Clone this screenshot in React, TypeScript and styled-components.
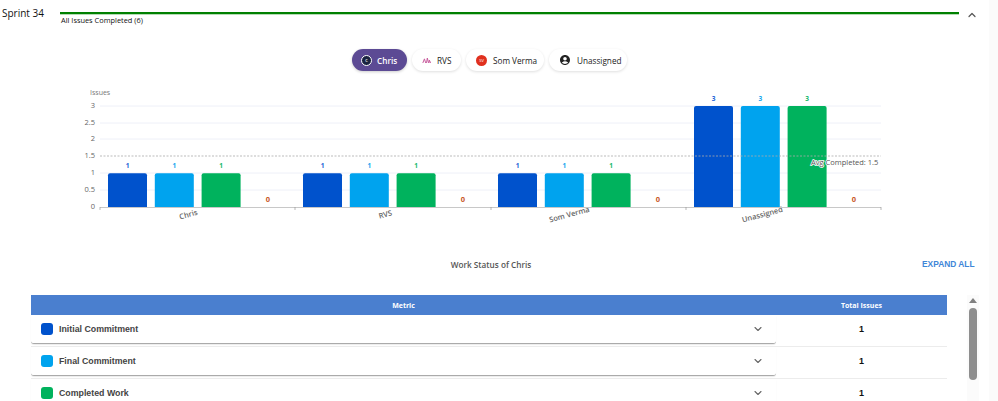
import React from 'react';
import styled, { createGlobalStyle } from 'styled-components';
import { MdAccountCircle } from 'react-icons/md';
import { ChevronDown, ChevronUp } from 'lucide-react';

const BLUE = '#0052cc';
const SKY = '#00a3ee';
const GREEN = '#00b25d';

const GlobalStyle = createGlobalStyle`
  html, body {
    margin: 0;
    height: 401px;
    overflow: hidden;
    background: #fff;
    font-family: "Open Sans", "Liberation Sans", sans-serif;
  }
`;

const Page = styled.div`
  width: 998px;
  height: 401px;
  box-sizing: border-box;
  overflow: hidden;
  border-right: 9px solid #fbfbfb;
`;

const SprintHeader = styled.div`
  display: grid;
  grid-template-columns: 60px 899px 19px;
  height: 43px;
`;

const SprintName = styled.div`
  font-size: 10px;
  line-height: 14px;
  padding: 6px 0 0 2px;
  color: #111;
`;

const Progress = styled.div`
  padding-top: 12px;
`;

const ProgressBar = styled.div`
  height: 2px;
  background: #008000;
  box-shadow: 0 1px 0 #b5dcb5;
`;

const ProgressLabel = styled.div`
  font-size: 7.4px;
  line-height: 10px;
  margin: 1px 0 0 1px;
  color: #111;
`;

const Collapse = styled.div`
  display: flex;
  justify-content: flex-end;
  padding: 9px 0 0 0;
  color: #555;
`;

const Pills = styled.div`
  display: flex;
  gap: 5px;
  padding-left: 352px;
  height: 22px;
  margin: 6px 0 0;
`;

const Pill = styled.div<{ $active?: boolean; $width: number }>`
  display: flex;
  align-items: center;
  gap: ${(p) => (p.$active ? 5 : 6)}px;
  box-sizing: border-box;
  width: ${(p) => p.$width}px;
  height: 22px;
  padding-left: ${(p) => (p.$active ? 9 : 10)}px;
  border-radius: 11px;
  font-size: 8.2px;
  font-weight: ${(p) => (p.$active ? 600 : 400)};
  color: ${(p) => (p.$active ? '#fff' : '#222')};
  background: ${(p) => (p.$active ? '#5c4a94' : '#fff')};
  box-shadow: 0 1px 3px rgba(0, 0, 0, ${(p) => (p.$active ? 0.2 : 0.13)});
`;

const Avatar = styled.span<{ $bg: string }>`
  display: inline-flex;
  align-items: center;
  justify-content: center;
  box-sizing: border-box;
  width: 11px;
  height: 11px;
  flex: none;
  border-radius: 50%;
  background: ${(p) => p.$bg};
  color: #fff;
  font-size: 4px;
`;

const RingAvatar = styled(Avatar)`
  border: 1px solid #fff;
`;

const ChartFrame = styled.div`
  height: 177px;
  margin-top: 7px;

  svg {
    display: block;
  }
`;

const TitleRow = styled.div`
  display: grid;
  grid-template-columns: 922px 1fr;
  height: 18px;
  align-items: center;
`;

const ChartTitle = styled.div`
  font-size: 8.2px;
  font-weight: 600;
  color: #555;
  text-align: center;
  padding-left: 60px;
`;

const ExpandAll = styled.div`
  font-family: "Liberation Sans", sans-serif;
  font-size: 8.4px;
  font-weight: 700;
  color: #3f86d8;
  white-space: nowrap;
`;

const TableArea = styled.div`
  display: flex;
  margin: 22px 0 0 31px;
`;

const Table = styled.div`
  width: 916px;
  font-family: "Liberation Sans", sans-serif;
`;

const HeadRow = styled.div`
  display: grid;
  grid-template-columns: 745px 171px;
  height: 20px;
  align-items: center;
  background: #4a7fcf;
  color: #fff;
  font-family: "Open Sans", sans-serif;
  font-size: 7px;
  font-weight: 700;
  text-align: center;
`;

const Row = styled.div`
  display: grid;
  grid-template-columns: 745px 171px;
  height: 32px;
  box-sizing: border-box;
  border-bottom: 1.5px solid #ececec;
`;

const MetricCell = styled.div`
  display: flex;
  align-items: center;
  height: 29px;
  box-sizing: border-box;
  padding: 0 12px 0 10px;
  background: #fff;
  border-bottom: 1px solid #aaa;
  border-radius: 0 0 3px 3px;
  box-shadow: 0 1px 1px rgba(0, 0, 0, 0.08);
  color: #666;
`;

const Swatch = styled.span<{ $color: string }>`
  width: 12px;
  height: 12px;
  flex: none;
  border-radius: 3px;
  background: ${(p) => p.$color};
`;

const MetricName = styled.span`
  flex: 1;
  margin-left: 6px;
  font-size: 8.8px;
  font-weight: 700;
  color: #444;
`;

const TotalCell = styled.div`
  display: flex;
  justify-content: center;
  padding-top: 9px;
  font-size: 9px;
  font-weight: 700;
  color: #111;
`;

const ScrollTrack = styled.div`
  display: flex;
  flex-direction: column;
  align-items: center;
  width: 12px;
  height: 106px;
  margin-left: 20px;
  background: #fbfbfb;
`;

const ScrollArrow = styled.span`
  margin-top: 3px;
  border-left: 4px solid transparent;
  border-right: 4px solid transparent;
  border-bottom: 5px solid #808080;
`;

const ScrollThumb = styled.div`
  width: 8px;
  height: 72px;
  margin-top: 5px;
  border-radius: 4px;
  background: #8e8e8e;
`;

const yTicks = [
  { label: '3', y: 106 },
  { label: '2.5', y: 123 },
  { label: '2', y: 139 },
  { label: '1.5', y: 156 },
  { label: '1', y: 173 },
  { label: '0.5', y: 190 },
  { label: '0', y: 207 },
];

const groups = [
  { name: 'Chris', x: 108, zero: 268, value: 1, labelX: 189 },
  { name: 'RVS', x: 303, zero: 463, value: 1, labelX: 386 },
  { name: 'Som Verma', x: 498, zero: 658, value: 1, labelX: 570 },
  { name: 'Unassigned', x: 694, zero: 854, value: 3, labelX: 763 },
];

const barColors = [BLUE, SKY, GREEN];
const labelColors = ['#1c62d6', '#14a5ee', '#14b86a'];
const CHART_TOP = 78; // chart svg starts here on the page

const Chart = () => (
  <svg width={989} height={177} viewBox={`0 ${CHART_TOP} 989 177`} fontFamily="Open Sans, sans-serif">
    <text x={90} y={95} fontSize={7} fill="#777">Issues</text>
    {yTicks.map((t) => (
      <g key={t.label}>
        <text x={95} y={t.y + 2} fontSize={7.5} fill="#666" textAnchor="end">{t.label}</text>
        {t.label !== '1.5' && t.label !== '0' && (
          <line x1={100} x2={881} y1={t.y} y2={t.y} stroke="#eef0f8" />
        )}
      </g>
    ))}
    {groups.map((g) => {
      const h = g.value * 33.67;
      return (
        <g key={g.name}>
          {barColors.map((color, i) => {
            const x = g.x + i * 46.8;
            return (
              <g key={color}>
                <path
                  d={`M${x} 207V${207 - h + 2}q0-2 2-2h35q2 0 2 2V207z`}
                  fill={color}
                />
                <text x={x + 19.5} y={207 - h - 5} fontSize={6.5} fontWeight={700} fill={labelColors[i]} textAnchor="middle">
                  {g.value}
                </text>
              </g>
            );
          })}
          <text x={g.zero} y={202} fontSize={7.5} fontWeight={700} fill="#c8561e" textAnchor="middle">0</text>
          <text
            x={g.labelX}
            y={217}
            fontSize={7.5}
            fontWeight={600}
            fill="#666"
            textAnchor="middle"
            transform={`rotate(-15 ${g.labelX} 217)`}
          >
            {g.name}
          </text>
        </g>
      );
    })}
    <line x1={100} x2={881} y1={156} y2={156} stroke="#aaa" strokeDasharray="2 1.5" strokeWidth={0.8} />
    <line x1={100} x2={881} y1={207.5} y2={207.5} stroke="#c8c8c8" strokeWidth={1.2} />
    {[100, 295, 491, 686, 881].map((x) => (
      <line key={x} x1={x} x2={x} y1={207} y2={210} stroke="#999" strokeWidth={0.7} />
    ))}
    <text x={811} y={164.5} fontSize={7.5} fill="#555" stroke="#fff" strokeWidth={1.5} paintOrder="stroke">
      Avg Completed: 1.5
    </text>
  </svg>
);

const RvsLogo = () => (
  <svg width={9} height={7} viewBox="0 0 11 8">
    <path d="M1 7L3 2L4.5 7M5.5 7L6.5 1L8 7M8.5 7L9 3.5L10.5 7" fill="none" stroke="#c75a9b" strokeWidth={1.2} />
  </svg>
);

const rows = [
  { name: 'Initial Commitment', color: BLUE },
  { name: 'Final Commitment', color: SKY },
  { name: 'Completed Work', color: GREEN },
];

const App: React.FC = () => {
  return (
    <Page>
      <GlobalStyle />
      <SprintHeader>
        <SprintName>Sprint 34</SprintName>
        <Progress>
          <ProgressBar />
          <ProgressLabel>All Issues Completed (6)</ProgressLabel>
        </Progress>
        <Collapse>
          <ChevronUp size={12} strokeWidth={2.4} />
        </Collapse>
      </SprintHeader>

      <Pills>
        <Pill $active $width={55}>
          <RingAvatar $bg="#1a2340">C</RingAvatar>
          Chris
        </Pill>
        <Pill $width={49}>
          <RvsLogo />
          RVS
        </Pill>
        <Pill $width={78}>
          <Avatar $bg="#e0301e">SV</Avatar>
          Som Verma
        </Pill>
        <Pill $width={78}>
          <MdAccountCircle size={12} color="#222" />
          Unassigned
        </Pill>
      </Pills>

      <ChartFrame>
        <Chart />
      </ChartFrame>

      <TitleRow>
        <ChartTitle>Work Status of Chris</ChartTitle>
        <ExpandAll>EXPAND ALL</ExpandAll>
      </TitleRow>

      <TableArea>
        <Table>
          <HeadRow>
            <div>Metric</div>
            <div>Total Issues</div>
          </HeadRow>
          {rows.map((r) => (
            <Row key={r.name}>
              <MetricCell>
                <Swatch $color={r.color} />
                <MetricName>{r.name}</MetricName>
                <ChevronDown size={12} strokeWidth={2.2} />
              </MetricCell>
              <TotalCell>1</TotalCell>
            </Row>
          ))}
        </Table>
        <ScrollTrack>
          <ScrollArrow />
          <ScrollThumb />
        </ScrollTrack>
      </TableArea>
    </Page>
  );
};

export default App;
